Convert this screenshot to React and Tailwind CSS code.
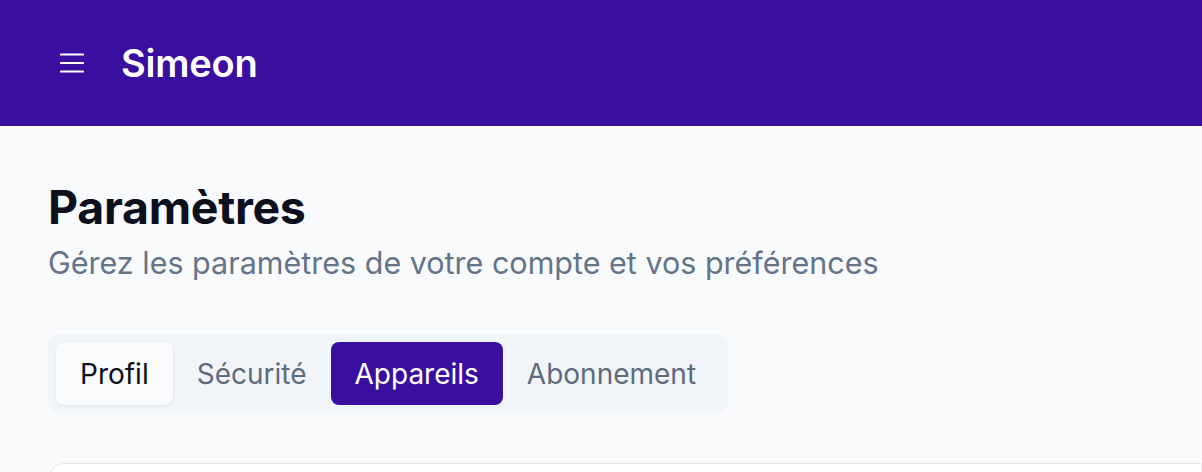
const tabs = ["Profil", "Sécurité", "Appareils", "Abonnement"];

function MenuIcon() {
  return (
    <svg width="24" height="20" viewBox="0 0 24 20" fill="none" stroke="currentColor" strokeWidth="2.2" strokeLinecap="round">
      <line x1="1" y1="1.5" x2="23" y2="1.5" />
      <line x1="1" y1="10" x2="23" y2="10" />
      <line x1="1" y1="18.5" x2="23" y2="18.5" />
    </svg>
  );
}

export default function App() {
  const active = "Appareils";

  return (
    <div className="min-h-[472px] overflow-hidden bg-[#f9fafb] font-['Inter','Liberation_Sans',sans-serif]">
      {/* Top bar */}
      <header className="flex h-[126px] items-center bg-[#3a0fa0] px-[60px] text-white">
        <button className="flex items-center text-white">
          <MenuIcon />
        </button>
        <span className="ml-[37px] text-[38px] font-semibold tracking-[-0.2px]">Simeon</span>
      </header>

      <main className="px-12 pt-[54px]">
        <h1 className="text-[46.5px] leading-[54px] font-bold tracking-[-0.3px] text-[#0b0f1e]">Paramètres</h1>
        <p className="mt-[8px] text-[30.5px] leading-[42px] text-[#64748b]">
          Gérez les paramètres de votre compte et vos préférences
        </p>

        {/* Tabs */}
        <div className="mt-[50px] inline-flex items-center rounded-[12px] bg-[#f1f4f9] p-2">
          {tabs.map((t) => {
            if (t === active) {
              return (
                <button key={t} className="h-[63px] rounded-[8px] bg-[#3a0fa0] px-[24px] text-[28px] text-white">
                  {t}
                </button>
              );
            }
            if (t === "Profil") {
              return (
                <button key={t} className="h-[63px] rounded-[8px] bg-[#fafbfc] px-[24px] text-[28px] text-[#0b0f1e] shadow-[0_1px_3px_rgba(0,0,0,0.08)]">
                  {t}
                </button>
              );
            }
            return (
              <button key={t} className="h-[63px] rounded-[8px] px-[24px] text-[28px] text-[#5f6b7e]">
                {t}
              </button>
            );
          })}
        </div>

        {/* Card (cut off at bottom) */}
        <div className="mt-[50px] -mr-12 h-[120px] rounded-tl-[16px] border border-[#e4e6ea] bg-white"></div>
      </main>
    </div>
  );
}
